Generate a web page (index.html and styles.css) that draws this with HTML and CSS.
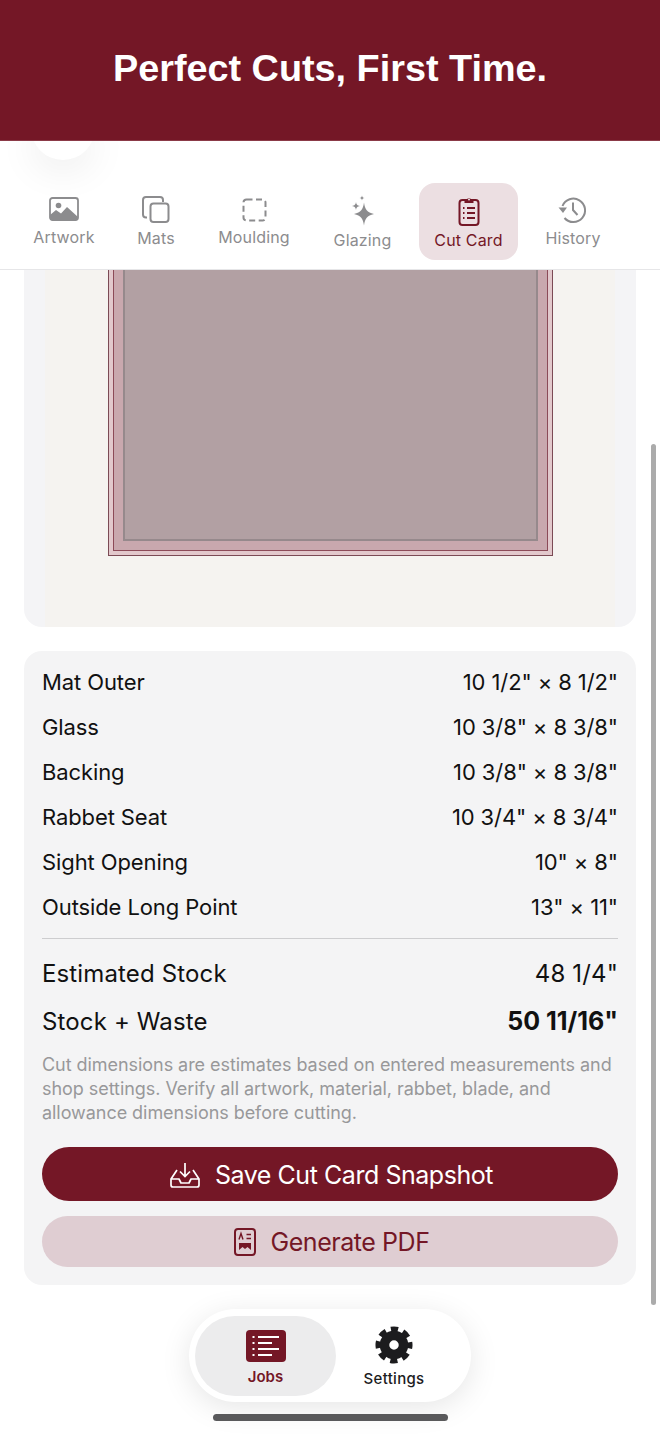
FILE: index.html
```html
<!DOCTYPE html>
<html lang="en">
<head>
<meta charset="UTF-8">
<title>Cut Card</title>
<link rel="stylesheet" href="styles.css">
</head>
<body>
<div class="screen">
  <header class="hero"><h1>Perfect Cuts, First Time.</h1></header>

  <nav class="tabs">
    <div class="blob"></div>
    <div class="tab">
      <svg class="ico" viewBox="0 0 30 24"><rect x="1" y="1" width="28" height="22" rx="2.5" fill="none" stroke="currentColor" stroke-width="1.8"/><circle cx="9.5" cy="8.5" r="2.8" fill="currentColor"/><path d="M1 23V18l6-5 5 3.500 6-6.500 11 10v3z" fill="currentColor"/></svg>
      <span>Artwork</span>
    </div>
    <div class="tab tab-mid">
      <svg class="ico" viewBox="0 0 30 30"><path d="M6 23.500H5a3 3 0 0 1-3-3V6a3 3 0 0 1 3-3h14a3 3 0 0 1 3 3v2" fill="none" stroke="currentColor" stroke-width="2"/><rect x="9.500" y="9.500" width="18" height="18.500" rx="3" fill="none" stroke="currentColor" stroke-width="2"/></svg>
      <span>Mats</span>
    </div>
    <div class="tab">
      <svg class="ico" viewBox="0 0 30 30"><rect x="4.500" y="5.500" width="22" height="21" rx="3" fill="none" stroke="currentColor" stroke-width="2" stroke-dasharray="6 3.500"/></svg>
      <span>Moulding</span>
    </div>
    <div class="tab tab-low">
      <svg class="ico" viewBox="0 0 30 30"><path d="M16 7.500c1 7 3 10 10 11.500-7 1.500-9 4.500-10 11.500-1-7-3-10-10-11.500 7-1.500 9-4.500 10-11.500z" fill="currentColor"/><path d="M8 7c.5 2.800 1.200 3.500 4 4-2.800.5-3.500 1.200-4 4-.5-2.800-1.200-3.500-4-4 2.800-.5 3.500-1.200 4-4zM14 .5c.3 1.700.8 2.200 2.500 2.500-1.700.3-2.200.8-2.500 2.500-.3-1.700-.8-2.200-2.500-2.500 1.700-.3 2.200-.8 2.500-2.500z" fill="currentColor"/></svg>
      <span>Glazing</span>
    </div>
    <div class="tab tab-low tab-on">
      <svg class="ico" viewBox="0 0 30 30"><rect x="5.500" y="5" width="19" height="25" rx="3" fill="none" stroke="currentColor" stroke-width="2"/><path d="M10.500 8V4.500h2.300a2.500 2.500 0 0 1 4.400 0h2.300V8z" fill="currentColor"/><circle cx="15" cy="4.600" r="1" fill="#ecdfe2"/><path d="M9 13h1.500M9 18h1.500M9 23h1.500M13 13h8M13 18h8M13 23h8" stroke="currentColor" stroke-width="1.800" fill="none"/></svg>
      <span>Cut Card</span>
    </div>
    <div class="tab tab-mid">
      <svg class="ico" viewBox="0 0 30 30"><path d="M4.500 12A11.700 11.700 0 1 1 6.500 24" fill="none" stroke="currentColor" stroke-width="2"/><path d="M.5 13.500H9L5 19z" fill="currentColor"/><path d="M15 8.500V16l4.500 5" fill="none" stroke="currentColor" stroke-width="2"/></svg>
      <span>History</span>
    </div>
  </nav>

  <main class="scroll">
    <section class="preview">
      <div class="canvas">
        <div class="frame"><div class="mat"><div class="opening"></div></div></div>
      </div>
    </section>

    <section class="stats">
      <div class="row"><span>Mat Outer</span><span>10 1/2" × 8 1/2"</span></div>
      <div class="row"><span>Glass</span><span>10 3/8" × 8 3/8"</span></div>
      <div class="row"><span>Backing</span><span>10 3/8" × 8 3/8"</span></div>
      <div class="row"><span>Rabbet Seat</span><span>10 3/4" × 8 3/4"</span></div>
      <div class="row"><span>Sight Opening</span><span>10" × 8"</span></div>
      <div class="row"><span>Outside Long Point</span><span>13" × 11"</span></div>
      <hr class="rule">
      <div class="row row-big"><span>Estimated Stock</span><span>48 1/4"</span></div>
      <div class="row row-big"><span>Stock + Waste</span><b>50 11/16"</b></div>
      <p class="note">Cut dimensions are estimates based on entered measurements and shop settings. Verify all artwork, material, rabbet, blade, and allowance dimensions before cutting.</p>
      <button class="btn btn-save">
        <svg viewBox="0 0 30 26" width="30" height="26"><path d="M7 8 1 17v6a2 2 0 0 0 2 2h24a2 2 0 0 0 2-2v-6l-6-9M1 17h8l2 4h8l2-4h8" fill="none" stroke="currentColor" stroke-width="1.700" stroke-linejoin="round"/><path d="M15 1v13M10 9.500l5 5 5-5" fill="none" stroke="currentColor" stroke-width="1.700"/></svg>
        Save Cut Card Snapshot
      </button>
      <button class="btn btn-pdf">
        <svg viewBox="0 0 22 28" width="22" height="28"><rect x="1" y="1" width="20" height="26" rx="3" fill="none" stroke="currentColor" stroke-width="2"/><path d="M5 22v-7h12v7l-3.500-3-2.500 2-2.500-2z" fill="currentColor"/><path d="M12.500 6.500H17M12.500 10.500H17M5 11.500l2-6 2 6" fill="none" stroke="currentColor" stroke-width="1.400"/></svg>
        Generate PDF
      </button>
    </section>
  </main>

  <div class="thumb"></div>

  <nav class="dock">
    <div class="dock-item dock-on">
      <svg viewBox="0 0 40 32" width="40" height="32"><rect width="40" height="32" rx="4" fill="currentColor"/><path d="M6.500 7h2M6.500 13h2M6.500 19h2M6.500 25h2M12 7h21M12 13h14M12 19h21M12 25h14" stroke="#fff" stroke-width="2" fill="none"/></svg>
      <span>Jobs</span>
    </div>
    <div class="dock-item">
      <svg viewBox="0 0 40 40" width="38" height="38"><circle cx="20" cy="20" r="16.500" fill="none" stroke="currentColor" stroke-width="6" stroke-dasharray="7.500 5.460" stroke-dashoffset="3.750"/><circle cx="20" cy="20" r="10" fill="none" stroke="currentColor" stroke-width="10"/></svg>
      <span>Settings</span>
    </div>
  </nav>
  <div class="homebar"></div>
</div>
</body>
</html>
```

FILE: styles.css
```css
*{
    box-sizing:border-box;
    margin:0;
    padding:0;
}
body{
    font-family:Inter, "Liberation Sans", sans-serif;
    background:#fff;
    color:#111;
}
.screen{
    position:relative;
    width:660px;
    height:1434px;
    overflow:hidden;
    display:flex;
    flex-direction:column;
}
.hero{
    position:relative;
    z-index:2;
    height:141px;
    flex:none;
    background:#741726;
    border-bottom:1px solid #8b3a47;
    display:flex;
    justify-content:center;
    align-items:center;
    padding-bottom:4px;
}
.hero h1{
    font-family:"Liberation Sans", sans-serif;
    font-size:37.8px;
    font-weight:700;
    color:#fff;
}
.tabs{
    position:relative;
    flex:none;
    height:129px;
    background:#fff;
    border-bottom:1px solid #e6e6e8;
    padding:42px 0 0 18px;
    display:grid;
    grid-template-columns:92px 92px 104px 113px 99px 110px;
    align-items:start;
}
.blob{
    position:absolute;
    left:31px;
    top:-13px;
    width:64px;
    height:32px;
    border-radius:0 0 32px 32px;
    background:#fff;
    box-shadow:0 8px 40px rgba(0,0,0,.09);
}
.tab{
    position:relative;
    height:77px;
    padding-top:11px;
    display:flex;
    flex-direction:column;
    align-items:center;
    gap:3px;
    font-size:16px;
    letter-spacing:.15px;
    color:#8c8c8e;
}
.tab-mid{
    gap:4px;
}
.tab-low{
    padding-top:12px;
    gap:5px;
}
.tab-on{
    background:#ecdfe2;
    border-radius:16px;
    color:#741726;
}
.ico{
    width:30px;
    height:30px;
    overflow:visible;
}
.scroll{
    flex:1;
    min-height:0;
    overflow:hidden;
    padding:0 24px;
}
.preview{
    height:397px;
    margin-top:-40px;
    background:#f4f4f6;
    border-radius:18px;
    overflow:hidden;
    padding:0 21px;
}
.canvas{
    height:398px;
    background:#f5f3f0;
    padding-bottom:72px;
    display:flex;
    justify-content:center;
    align-items:flex-end;
}
.frame{
    width:445px;
    height:326px;
    background:#e2c8cc;
    border:1px solid #7b4a55;
    padding:4px;
}
.mat{
    height:100%;
    background:#c9a8ae;
    border:1px solid #8c4a58;
    padding:0 9px 9px;
    border-top:0;
}
.opening{
    height:100%;
    background:#b2a0a3;
    border:1px solid #96898c;
    border-width:0 2px 2px;
}
.stats{
    margin-top:24px;
    height:634px;
    background:#f4f4f5;
    border-radius:18px;
    padding:8px 18px 0;
    display:flex;
    flex-direction:column;
}
.row{
    display:flex;
    justify-content:space-between;
    align-items:center;
    height:45px;
    flex:none;
    font-size:22px;
    letter-spacing:-.1px;
}
.rule{
    border:0;
    border-top:1px solid #cdcdcf;
    margin:9px 0 10px;
}
.row-big{
    height:48px;
    font-size:24px;
    letter-spacing:.14px;
}
.row-big b{
    font-size:25px;
    font-weight:700;
    letter-spacing:0;
}
.note{
    margin-top:8px;
    font-size:18px;
    line-height:24px;
    letter-spacing:-.05px;
    color:#98989a;
}
.btn{
    font-family:inherit;
    border:0;
    width:100%;
    flex:none;
    display:flex;
    justify-content:center;
    align-items:center;
    gap:15px;
    padding-left:3px;
    font-size:25px;
    letter-spacing:-.45px;
}
.btn-save{
    height:54px;
    margin-top:22px;
    padding-top:2px;
    border-radius:27px;
    background:#741726;
    color:#fff;
}
.btn-pdf{
    height:51px;
    margin-top:15px;
    border-radius:26px;
    background:#dfcdd2;
    color:#741726;
}
.thumb{
    position:absolute;
    left:651px;
    top:444px;
    width:5px;
    height:861px;
    border-radius:3px;
    background:#ababab;
}
.dock{
    position:absolute;
    left:189px;
    top:1309px;
    width:282px;
    height:93px;
    padding:7px 6px 6px;
    border-radius:47px;
    background:#fff;
    box-shadow:0 6px 30px rgba(0,0,0,.1);
    display:flex;
}
.dock-item{
    width:116px;
    flex:none;
    display:flex;
    flex-direction:column;
    align-items:center;
    justify-content:flex-start;
    padding-top:10px;
    gap:5px;
    font-size:15px;
    letter-spacing:.3px;
    font-weight:500;
    color:#1c1c1e;
}
.dock-on{
    width:141px;
    height:80px;
    padding-top:14px;
    border-radius:40px;
    background:#ececed;
    color:#741726;
    font-weight:600;
    letter-spacing:0;
}
.homebar{
    position:absolute;
    left:213px;
    top:1414px;
    width:235px;
    height:7px;
    border-radius:4px;
    background:#59595b;
}
```
